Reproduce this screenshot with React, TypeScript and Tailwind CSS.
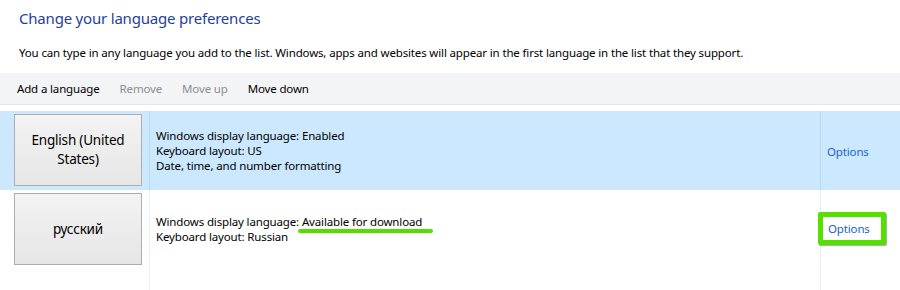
const font = { fontFamily: '"Noto Sans", "Open Sans", sans-serif' }

function LangButton({ label }: { label: string }) {
  return (
    <div className="flex h-[72px] w-[128px] items-center justify-center border border-[#adadad] bg-gradient-to-b from-[#f3f3f3] to-[#e6e6e6] px-3 text-center text-[13.5px] leading-[19px] tracking-[-0.2px] text-black">
      {label}
    </div>
  )
}

export default function App() {
  return (
    <div className="h-[290px] w-[900px] overflow-hidden bg-white" style={font}>
      {/* Header */}
      <div className="px-[19px] pt-[6px]">
        <h1 className="text-[15px] leading-[24px] tracking-[-0.2px] text-[#1e3f9e]">Change your language preferences</h1>
        <p className="mt-[15px] text-[11.5px] leading-[16px] tracking-[-0.15px] text-black">
          You can type in any language you add to the list. Windows, apps and websites will appear in the first language in the list that they support.
        </p>
      </div>

      {/* Toolbar */}
      <div className="mt-[12px] flex h-[32px] items-center gap-[20px] border-b border-[#e3e6ea] bg-[#f3f4f6] px-[17px] text-[11.5px] tracking-[-0.15px]">
        <span className="text-black">Add a language</span>
        <span className="text-[#8d8d8d]">Remove</span>
        <span className="text-[#8d8d8d]">Move up</span>
        <span className="text-black">Move down</span>
      </div>

      {/* Language list */}
      <div className="mt-[6px] text-[11.5px] leading-[15px] tracking-[-0.15px] text-black">
        <div className="flex h-[79px] bg-[#cce8ff]">
          <div className="flex w-[149px] items-start pl-[14px] pt-[3px]">
            <LangButton label="English (United States)" />
          </div>
          <div className="flex flex-1 flex-col justify-center border-l border-[#b9d9f5] pl-[6px]">
            <div>Windows display language: Enabled</div>
            <div>Keyboard layout: US</div>
            <div>Date, time, and number formatting</div>
          </div>
          <div className="flex w-[80px] items-center border-l border-[#b9d9f5] pl-[6px] pt-[1px] text-[#1a62d0]">Options</div>
        </div>

        <div className="flex h-[100px]">
          <div className="flex w-[149px] items-start pl-[14px] pt-[3px]">
            <LangButton label="русский" />
          </div>
          <div className="flex flex-1 flex-col border-l border-[#e3effb] pl-[6px] pt-[24px]">
            <div>
              Windows display language:{' '}
              <span className="relative">
                Available for download
                <span className="absolute -left-[4px] -right-[11px] top-[15px] h-[4px] rounded-full bg-[#55dd00]" />
              </span>
            </div>
            <div>Keyboard layout: Russian</div>
          </div>
          <div className="w-[80px] border-l border-[#e3effb] pt-[22px]">
            <div className="-ml-[3px] inline-block rounded-[2px] border-[5px] border-[#55e000] bg-white py-[4px] pl-[5px] pr-[11px] text-[#1a62d0] shadow-[1px_1px_1px_rgba(0,0,0,0.35)]">
              Options
            </div>
          </div>
        </div>
      </div>
    </div>
  )
}
